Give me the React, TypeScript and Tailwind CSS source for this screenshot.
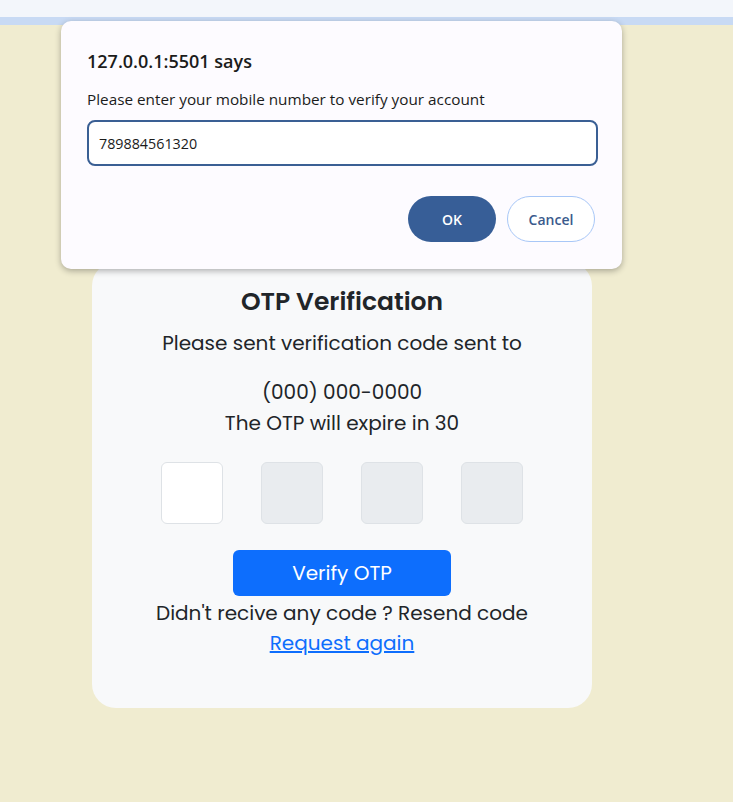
import { useState } from "react";

export default function App() {
  const [phone, setPhone] = useState("789884561320");
  const boxes = [0, 1, 2, 3];

  return (
    <div className="relative min-h-[802px] w-full bg-[#f0ecd0]" style={{ fontFamily: "Poppins, 'Open Sans', sans-serif" }}>
      <div className="h-[17px] bg-[#f3f6fb]" />
      <div className="h-[8px] bg-[#c8daf4]" />

      <div className="pt-[237px] pl-[92px]">
        <div className="w-[500px] rounded-[24px] bg-[#f8f9fa] pt-[22px] pb-[50px] flex flex-col items-center text-[#212529]">
          <h2 className="text-[25px] font-semibold leading-[36px]">OTP Verification</h2>
          <p className="text-[20px] leading-[30px] mt-[8px]">Please sent verification code sent to</p>
          <p className="text-[20px] leading-[30px] mt-[19px]">(000) 000-0000</p>
          <p className="text-[20px] leading-[30px] mt-[1px]">The OTP will expire in 30</p>
          <div className="flex gap-[38px] mt-[24px]">
            {boxes.map((b) => (
              <input
                key={b}
                maxLength={1}
                className={`w-[62px] h-[62px] rounded-[6px] border border-[#dee2e6] text-center text-xl outline-none ${
                  b === 0 ? "bg-white" : "bg-[#e9ecef]"
                }`}
              />
            ))}
          </div>
          <button className="mt-[26px] w-[218px] h-[46px] rounded-[6px] bg-[#0d6efd] text-white text-[20px]">
            Verify OTP
          </button>
          <p className="text-[20px] leading-[30px] mt-[2px]">Didn't recive any code ? Resend code</p>
          <a href="#" className="text-[20px] leading-[30px] text-[#0d6efd] underline">Request again</a>
        </div>
      </div>

      <div
        className="absolute left-[61px] top-[21px] w-[561px] h-[248px] rounded-[10px] bg-[#fdfbff] shadow-[0_2px_6px_rgba(0,0,0,0.3)] px-[26px] pt-[26px]"
        style={{ fontFamily: "'Segoe UI', 'Open Sans', 'Noto Sans', sans-serif" }}
      >
        <div className="text-[18px] font-semibold text-[#1b1b1b] leading-[28px]">127.0.0.1:5501 says</div>
        <div className="text-[15.3px] text-[#1b1b1b] leading-[22px] mt-[13px]">Please enter your mobile number to verify your account</div>
        <input
          value={phone}
          onChange={(e) => setPhone(e.target.value)}
          className="mt-[10px] w-[511px] h-[46px] rounded-[8px] border-2 border-[#3a5f94] px-[10px] text-[14.3px] text-[#1b1b1b] bg-white outline-none"
        />
        <div className="flex justify-end gap-[11px] mt-[30px] pr-[1px]">
          <button className="w-[88px] h-[46px] rounded-full bg-[#375e97] text-white text-[14px] font-semibold">OK</button>
          <button className="w-[88px] h-[46px] rounded-full border border-[#a8c7f7] bg-white text-[#3a5a8c] text-[14px] font-semibold">
            Cancel
          </button>
        </div>
      </div>
    </div>
  );
}
